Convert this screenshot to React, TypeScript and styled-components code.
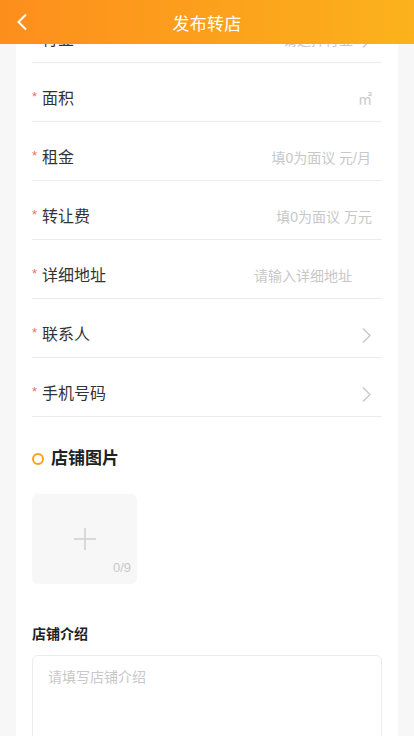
import React from "react";
import styled, { createGlobalStyle } from "styled-components";

const Global = createGlobalStyle`
  html, body { margin: 0; padding: 0; background: #f7f7f7; }
  body { font-family: "Liberation Sans", "Noto Sans CJK SC", sans-serif; }
  * { box-sizing: border-box; }
`;

const Header = styled.header`
  position: fixed;
  top: 0;
  left: 0;
  right: 0;
  height: 44px;
  z-index: 10;
  display: flex;
  align-items: center;
  justify-content: center;
  background: linear-gradient(90deg, #fd8e1c 0%, #fbb21c 100%);
`;

const Title = styled.h1`
  margin: 0;
  font-size: 17px;
  font-weight: 400;
  color: #fff;
  letter-spacing: 0.3px;
`;

const BackBtn = styled.button`
  position: absolute;
  left: 12px;
  top: 12px;
  width: 20px;
  height: 20px;
  padding: 0;
  border: 0;
  background: none;
  display: flex;
  align-items: center;
  justify-content: center;
`;

const Page = styled.main`
  padding: 4px 16px 0;
`;

const Card = styled.section`
  background: #fff;
  padding: 0 16px;
  min-height: 740px;
`;

const Row = styled.div`
  display: flex;
  align-items: center;
  height: 59px;
  padding: 26px 10px 12px 0;
  border-bottom: 1px solid #ececec;
`;

const Label = styled.div`
  flex: 1;
  display: flex;
  align-items: center;
  font-size: 16px;
  line-height: 20px;
  color: #333;
`;

const Star = styled.span`
  color: #f56c6c;
  font-size: 13px;
  line-height: 13px;
  width: 10px;
  margin-top: -6px;
`;

const Value = styled.div<{ $pr?: number }>`
  font-size: 14px;
  line-height: 20px;
  color: #c8c8c8;
  padding-right: ${(p) => p.$pr ?? 0}px;
  display: flex;
  align-items: center;
  gap: 8px;
`;

const SectionTitle = styled.h2`
  margin: 30px 0 0;
  display: flex;
  align-items: center;
  gap: 7px;
  font-size: 17px;
  line-height: 24px;
  font-weight: 700;
  color: #222;
`;

const Ring = styled.span`
  width: 12px;
  height: 12px;
  border-radius: 50%;
  border: 2.5px solid #f9a11b;
`;

const Upload = styled.div`
  position: relative;
  margin-top: 23px;
  width: 105px;
  height: 90px;
  border-radius: 6px;
  background: #f7f7f7;
  display: flex;
  align-items: center;
  justify-content: center;
`;

const Count = styled.span`
  position: absolute;
  right: 6px;
  bottom: 9px;
  font-size: 13px;
  color: #c8c8c8;
`;

const SubTitle = styled.h3`
  margin: 40px 0 0;
  font-size: 14px;
  line-height: 20px;
  font-weight: 700;
  color: #222;
`;

const TextArea = styled.div`
  margin-top: 11px;
  height: 140px;
  border: 1px solid #ececec;
  border-radius: 6px;
  padding: 11px 15px;
  font-size: 14px;
  line-height: 20px;
  color: #c8c8c8;
`;

const Chevron = () => (
  <svg width="11" height="17" viewBox="0 0 11 17">
    <path d="M2 1.5 L9 8.5 L2 15.5" fill="none" stroke="#c8c8c8" strokeWidth="1.4" />
  </svg>
);

type Field = { label: string; value?: string; unit?: React.ReactNode; arrow?: boolean; pr?: number };

const fields: Field[] = [
  { label: "行业", value: "请选择行业", arrow: true },
  { label: "面积", unit: "㎡" },
  { label: "租金", value: "填0为面议 元/月", pr: 1 },
  { label: "转让费", value: "填0为面议 万元" },
  { label: "详细地址", value: "请输入详细地址", pr: 20 },
  { label: "联系人", arrow: true },
  { label: "手机号码", arrow: true },
];

export default function App() {
  return (
    <>
      <Global />
      <Header>
        <BackBtn aria-label="返回">
          <svg width="12" height="18" viewBox="0 0 12 18">
            <path d="M10 1.5 L2.5 9 L10 16.5" fill="none" stroke="#fff" strokeWidth="2" />
          </svg>
        </BackBtn>
        <Title>发布转店</Title>
      </Header>
      <Page>
        <Card>
          {fields.map((f) => (
            <Row key={f.label}>
              <Label>
                <Star>*</Star>
                {f.label}
              </Label>
              <Value $pr={f.pr}>
                {f.value}
                {f.unit}
                {f.arrow && <Chevron />}
              </Value>
            </Row>
          ))}
          <SectionTitle>
            <Ring />
            店铺图片
          </SectionTitle>
          <Upload>
            <svg width="24" height="24" viewBox="0 0 24 24">
              <path d="M12 1 V23 M1 12 H23" stroke="#d0d0d0" strokeWidth="1.5" />
            </svg>
            <Count>0/9</Count>
          </Upload>
          <SubTitle>店铺介绍</SubTitle>
          <TextArea>请填写店铺介绍</TextArea>
        </Card>
      </Page>
    </>
  );
}
